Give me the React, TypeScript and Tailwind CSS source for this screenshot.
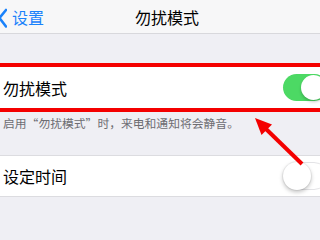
const Toggle = ({ on }: { on: boolean }) =>
  on ? (
    <div className="relative mr-[-8px] h-[27px] w-[45px] shrink-0 rounded-full bg-[#4cd964]">
      <div className="absolute right-[2px] top-[1px] h-[25px] w-[25px] rounded-full bg-white shadow-[0_2px_3px_rgba(0,0,0,0.2)]" />
    </div>
  ) : (
    <div className="relative mr-[-8px] h-[28px] w-[45px] shrink-0 rounded-full border border-[#e3e3e6] bg-white">
      <div className="absolute left-[-1px] top-[-1px] h-[28px] w-[28px] rounded-full bg-white shadow-[0_2px_4px_rgba(0,0,0,0.25),0_0_0_1px_rgba(0,0,0,0.05)]" />
    </div>
  );

export default function App() {
  return (
    <div
      className="relative h-[240px] w-[320px] overflow-hidden bg-[#efeff4] text-black"
      style={{ fontFamily: '"Noto Sans CJK SC", "Noto Sans", sans-serif' }}
      lang="zh-CN"
    >
      {/* nav bar */}
      <div className="relative flex h-[34px] items-center border-b border-[#d8d8dc] bg-[#f7f7f8]">
        <div className="flex items-center text-[#1a82fb]">
          <svg width="8" height="24" viewBox="0 0 8 24" className="ml-[-1px]">
            <polyline points="7,5 0.5,13 7,21.5" fill="none" stroke="#1a82fb" strokeWidth="2.6" strokeLinecap="round" strokeLinejoin="round" />
          </svg>
          <span className="ml-[5px] text-[16px] leading-none">设置</span>
        </div>
        <div className="absolute inset-y-0 left-[135px] flex items-center text-[16px] leading-none">勿扰模式</div>
      </div>

      <div className="h-[29px]" />

      {/* highlighted row */}
      <div className="h-[4px] bg-[#f40000]" />
      <div className="flex h-[41px] items-center justify-between bg-white pl-[3px]">
        <span className="text-[16px] leading-none">勿扰模式</span>
        <Toggle on />
      </div>
      <div className="h-[4px] bg-[#f40000]" />

      <div className="h-[43px] pl-[3px] pt-[5px] text-[11.8px] leading-none text-[#6d6d72]">
        启用“勿扰模式”时，来电和通知将会静音。
      </div>

      <div className="flex h-[42px] items-center justify-between border-y border-[#dcdce0] bg-white pl-[3px]">
        <span className="text-[16px] leading-none">设定时间</span>
        <Toggle on={false} />
      </div>

      {/* annotation arrow */}
      <svg className="absolute left-0 top-0" width="320" height="240" viewBox="0 0 320 240">
        <line x1="302" y1="164" x2="265" y2="128" stroke="#f40000" strokeWidth="4" />
        <polygon points="255,118 272,124.5 261.5,135" fill="#f40000" />
      </svg>
    </div>
  );
}
